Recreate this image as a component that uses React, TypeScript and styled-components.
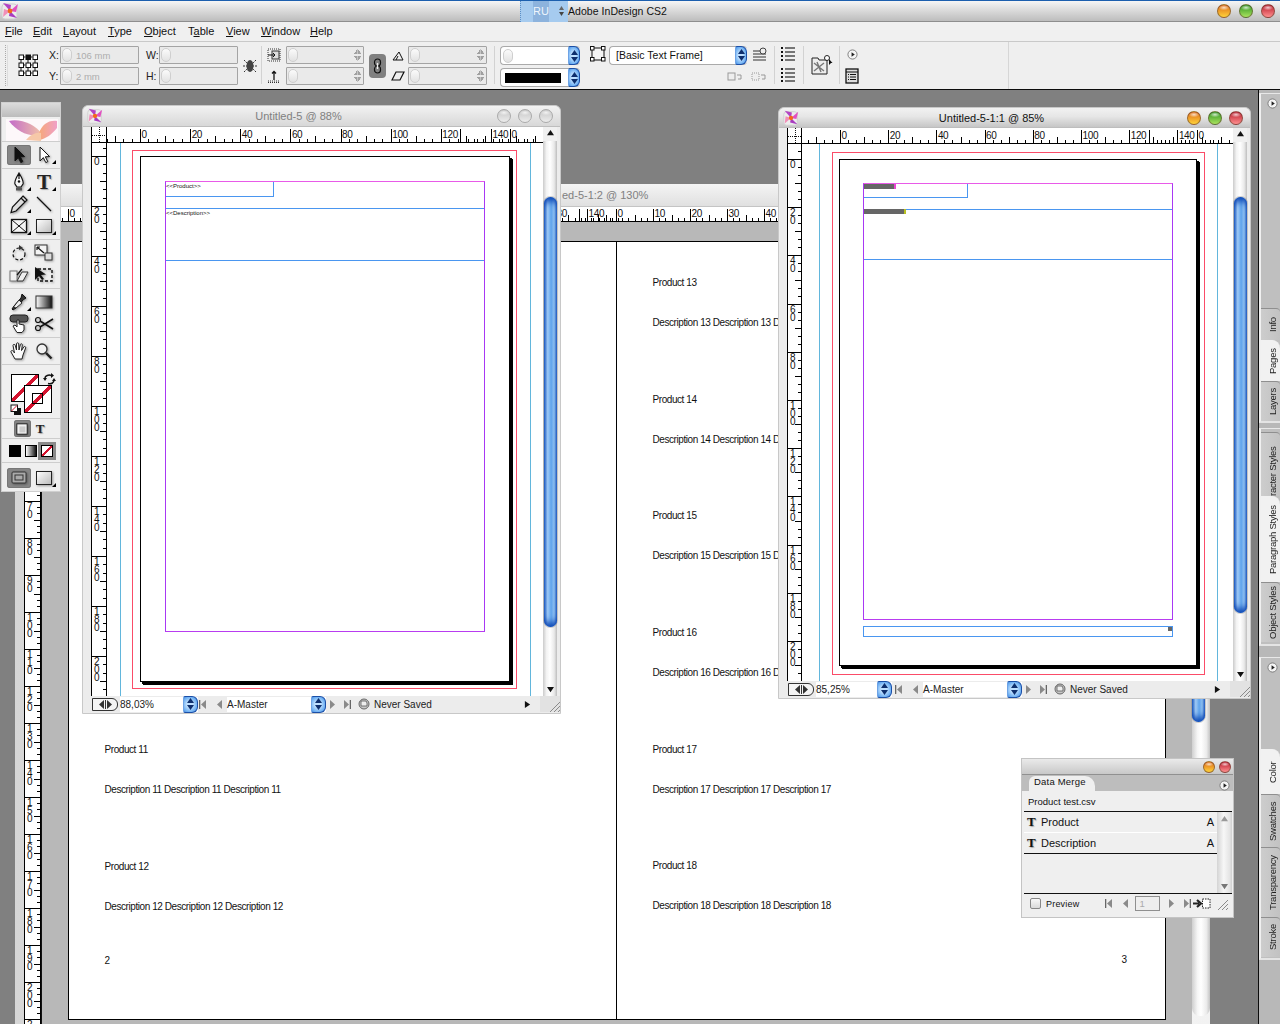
import React from 'react';
import styled, { createGlobalStyle } from 'styled-components';

const Global = createGlobalStyle`
  html, body { margin: 0; padding: 0; width: 1280px; height: 1024px; overflow: hidden; background: #808080; }
  * { box-sizing: border-box; }
  #root { width: 1280px; height: 1024px; font-family: "Liberation Sans", Arial, sans-serif; color: #111; }
`;

const Screen = styled.div`
  width: 1280px; height: 1024px; overflow: hidden;
  display: grid; grid-template-rows: 22px 20px 48px 1fr;
`;

/* ---------- app chrome ---------- */
const AppTitle = styled.header`
  display: flex; align-items: center; position: relative;
  border-top: 1px solid #1c5fae; border-bottom: 1px solid #8e8e8e;
  background: linear-gradient(#f6f6f6, #e4e4e4 30%, #bdbdbd);
  padding-right: 5px;
`;
const AppLogoSlot = styled.div`
  width: 22px; height: 20px; display: flex; align-items: center; justify-content: center; margin-left: -1px;
`;
const LangBox = styled.div`
  margin-left: 499px; width: 48px; height: 21px; background: #a6cbef;
  display: flex; align-items: center; justify-content: space-between; padding: 0 3px 0 12px;
  border-left: 1px dotted #5b8ec5;
`;
const LangCode = styled.span`
  width: 16px; height: 21px; background: #8db3dd; color: #eef5fc; font-size: 11px; line-height: 21px; text-align: center;
`;
const AppName = styled.div`
  font-size: 10.5px; flex: 1; white-space: nowrap; letter-spacing: 0.05px;
`;
const LightRow = styled.div<{ $gap: number }>`
  display: flex; align-items: center; column-gap: ${(p) => p.$gap}px;
`;
const LIGHTS: Record<string, [string, string]> = {
  orange: ['#dd6a18', '#ffd23a'],
  green: ['#2f9420', '#a9e35f'],
  red: ['#b81c2c', '#ff8f8f'],
  off: ['#c6c6c6', '#ececec'],
};
const Light = styled.span<{ $c: string; $s: number }>`
  width: ${(p) => p.$s}px; height: ${(p) => p.$s}px; border-radius: 50%; display: block;
  border: 1px solid ${(p) => (p.$c === 'off' ? '#aaa' : 'rgba(90,60,40,.55)')};
  background: radial-gradient(ellipse 45% 22% at 50% 22%, rgba(255,255,255,.75), transparent 100%),
    linear-gradient(${(p) => LIGHTS[p.$c][0]}, ${(p) => LIGHTS[p.$c][1]});
`;

const MenuBar = styled.nav`
  display: flex; align-items: center; background: #f0f0f0; border-bottom: 1px solid #c9c9c9; padding: 0 0 2px 5px; font-size: 11px;
`;
const MenuItem = styled.span<{ $w: number }>`
  width: ${(p) => p.$w}px; u { text-decoration: underline; }
`;

const ControlBar = styled.div`
  display: flex; align-items: stretch; background: #efefef; border-bottom: 1px solid #0c0c0c; height: 48px; padding-left: 5px;
  position: relative;
`;
const Grip = styled.div`
  width: 3px; margin: 3px 10px 3px 0; border-left: 1px dotted #aaa; border-right: 1px solid #ddd;
`;
const Cell = styled.div<{ $w: number; $ml?: number; $pt?: number }>`
  width: ${(p) => p.$w}px; margin-left: ${(p) => p.$ml ?? 0}px;
  display: flex; flex-direction: column; gap: 3px; padding-top: ${(p) => p.$pt ?? 4}px; align-items: center; flex: none;
`;
const CellRow = styled.div`
  display: flex; height: 18px; align-items: center; justify-content: space-between; width: 100%;
`;
const CellSpacer = styled.span`
  height: 2px; display: block;
`;
const CtrlLabel = styled.span`
  font-size: 10.5px; color: #222;
`;
const CtrlField = styled.div<{ $w: number }>`
  width: ${(p) => p.$w}px; height: 18px; border: 1px solid #a4a4a4; background: #eaeaea; border-radius: 1px;
  display: flex; align-items: center; gap: 4px; padding: 0 2px 0 1px; font-size: 9.5px; color: #adadad; flex: none;
`;
const Knob = styled.i`
  width: 10px; height: 14px; border-radius: 5px; background: linear-gradient(#fbfbfb,#e2e2e2); border: 1px solid #cfcfcf; display: block; flex: none;
`;
const GrayArrows = styled.i`
  margin-left: auto; width: 7px; height: 12px; display: block; flex: none;
  background:
    linear-gradient(to bottom right, transparent 49%, #a0a0a0 50%) 0 0 / 50% 5px no-repeat,
    linear-gradient(to bottom left, transparent 49%, #a0a0a0 50%) 100% 0 / 50% 5px no-repeat,
    linear-gradient(to top right, transparent 49%, #a0a0a0 50%) 0 100% / 50% 5px no-repeat,
    linear-gradient(to top left, transparent 49%, #a0a0a0 50%) 100% 100% / 50% 5px no-repeat;
`;
const Sep = styled.div<{ $ml: number }>`
  width: 1px; background: #d2d2d2; margin: 4px 0 5px ${(p) => p.$ml}px; flex: none;
`;
const Chain = styled.div`
  width: 17px; height: 24px; margin: 12px 0 0 5px; border-radius: 4px; background: #808080; display: flex; align-items: center; justify-content: center; flex: none;
`;
const Select = styled.div<{ $w: number }>`
  width: ${(p) => p.$w}px; height: 19px; background: #fff; border: 1px solid #aaa; border-right: 0; border-radius: 4px;
  display: flex; align-items: center; font-size: 10.5px; padding-left: 2px; position: relative; flex: none; white-space: nowrap;
`;
const BlueSpin = styled.i<{ $w?: number }>`
  position: absolute; right: 0; top: -1px; bottom: -1px; width: ${(p) => p.$w ?? 12}px; border-radius: 2px 6px 6px 2px;
  border: 1px solid #1b4fa8; border-left-color: #6ea3e5;
  background: radial-gradient(ellipse at 45% 50%, #bfe0ff 0 30%, #6fb0f2 70%, #3d7fd8);
  display: flex; align-items: center; justify-content: center;
`;
const StrokeSwatch = styled.span`
  width: 56px; height: 10px; background: #000; margin-left: 2px; display: block;
`;
const SelectText = styled.span`
  margin-left: 4px;
`;
const RightFill = styled.div`
  flex: 1; margin-left: 147px; border-left: 1px solid #d6d6d6;
`;
const MiniRow = styled.div`
  display: flex; justify-content: flex-end; gap: 8px; width: 100%; height: 18px; align-items: center; padding-right: 2px;
`;

/* ---------- workspace ---------- */
const Workspace = styled.main`
  position: relative; background: #808080; overflow: hidden;
`;
const SideStrip = styled.aside`
  position: absolute; left: 1258px; top: 0; width: 22px; height: 934px; background: #b8b8b8;
  border-left: 1px solid #0c0c0c; display: flex; flex-direction: column;
`;
const Dock = styled.div<{ $h: number; $mt: number }>`
  height: ${(p) => p.$h}px; margin-top: ${(p) => p.$mt}px; background: #bfbfbf; flex: none;
  border-left: 2px solid #f0f0f0; border-top: 1px solid #e8e8e8; border-bottom: 2px solid #e4e4e4;
  display: flex; flex-direction: column; justify-content: flex-end; padding-top: 3px; position: relative;
`;
const DockArrowSlot = styled.div`
  position: absolute; left: 6px; top: 4px;
`;
const DockTab = styled.div<{ $h: number; $on?: boolean; $pt?: number }>`
  height: ${(p) => p.$h}px; flex: none; display: flex; justify-content: flex-end; align-items: center;
  overflow: hidden; position: relative; padding-top: ${(p) => p.$pt ?? 0}px;
  background: ${(p) => (p.$on ? '#f1f1f1' : 'linear-gradient(90deg,#cdcdcd,#c2c2c2)')};
  border-top: 1px solid ${(p) => (p.$on ? '#f1f1f1' : '#8f8f8f')};
  border-top-right-radius: ${(p) => (p.$on ? '8px' : '4px')};
`;
const DockLabel = styled.span`
  writing-mode: vertical-rl; transform: rotate(180deg); white-space: nowrap; font-size: 9.5px; letter-spacing: -0.25px; color: #222;
  height: 100%; display: flex; justify-content: center; align-items: center; width: 16px;
`;

/* ---------- windows ---------- */
const DocWindow = styled.section<{ $x: number; $y: number; $w: number; $h: number; $tb: number; $z: number }>`
  position: absolute; left: ${(p) => p.$x}px; top: ${(p) => p.$y}px; width: ${(p) => p.$w}px; height: ${(p) => p.$h}px;
  z-index: ${(p) => p.$z};
  display: grid; grid-template-rows: ${(p) => p.$tb}px 1fr 16px; padding-bottom: 1px;
  background: #ececec; border: 1px solid #c8c8c8; border-radius: 6px 6px 0 0;
`;
const WinTitle = styled.div<{ $active?: boolean }>`
  display: flex; align-items: center; position: relative;
  background: linear-gradient(#f2f2f2, #e6e6e6 45%, ${(p) => (p.$active ? '#c6c6c6' : '#d8d8d8')});
  border-bottom: 1px solid #bdbdbd; border-radius: 6px 6px 0 0; padding: 0 7px 0 3px;
  font-size: 11px; color: ${(p) => (p.$active ? '#111' : '#808080')};
`;
const WinIcon = styled.div`
  width: 18px; height: 18px; display: flex; align-items: center; justify-content: center;
`;
const WinName = styled.div`
  flex: 1; text-align: center; padding-right: 4px;
`;
const WinBody = styled.div<{ $rw: number; $rh: number; $pl: number }>`
  display: grid; grid-template-columns: ${(p) => p.$rw}px 1fr 14px; grid-template-rows: ${(p) => p.$rh}px 1fr;
  padding: 0 3px 0 ${(p) => p.$pl}px; min-height: 0; min-width: 0;
`;
const RulerCorner = styled.div`
  background: #fff; border-left: 1px solid #000; border-bottom: 1px solid #000; border-right: 1px solid #000;
  position: relative;
`;
const RulerSvg = styled.svg`
  display: block; background: #fff; overflow: hidden;
  text { font-family: "Liberation Sans", Arial, sans-serif; font-size: 10px; fill: #111; }
  shape-rendering: crispEdges;
`;
const Scroll = styled.div`
  grid-column: 3; grid-row: 1 / span 2;
  display: flex; flex-direction: column; align-items: center; position: relative; width: 14px; min-height: 0;
  background: linear-gradient(90deg,#cbcbcb,#f3f3f3 25%,#fff 50%,#e9e9e9 80%,#bdbdbd);
`;
const ScrollThumb = styled.div<{ $mt: number; $h: number }>`
  margin-top: ${(p) => p.$mt}px; height: ${(p) => p.$h}px; width: 13px; flex: none; border-radius: 7px;
  background: linear-gradient(90deg,#2563c4,#a3cdf6 28%,#5ea3ec 55%,#93c3f2 78%,#2a66c6);
  box-shadow: inset 0 7px 6px -3px #0d47b4, inset 0 -7px 6px -3px #0d47b4, 0 0 0 1px rgba(120,120,120,.35);
`;
const ScrollEndCap = styled.div`
  margin-top: auto; display: flex; justify-content: center; padding-bottom: 3px;
`;
const ScrollTopCap = styled.div`
  padding-top: 2px; display: flex; justify-content: center; width: 100%; height: 14px; flex: none;
  background: #f0f0f0;
`;

const Canvas = styled.div`
  position: relative; background: #fff; overflow: hidden; min-width: 0; min-height: 0;
`;
const Guide = styled.i<{ $x: number }>`
  position: absolute; left: ${(p) => p.$x}px; top: 0; bottom: 0; width: 1px; background: #62b6dc;
`;
const Bleed = styled.div<{ $x: number; $y: number; $w: number; $h: number }>`
  position: absolute; left: ${(p) => p.$x}px; top: ${(p) => p.$y}px; width: ${(p) => p.$w}px; height: ${(p) => p.$h}px;
  border: 1px solid #fb4c68;
`;
const SheetPage = styled.div<{ $x: number; $y: number; $w: number; $h: number }>`
  position: absolute; left: ${(p) => p.$x}px; top: ${(p) => p.$y}px; width: ${(p) => p.$w}px; height: ${(p) => p.$h}px;
  border: 1px solid #000; box-shadow: 2px 2px 0 #000, 3px 3px 0 #000; background: #fff;
`;
const MarginBox = styled.div<{ $x: number; $y: number; $w: number; $h: number }>`
  position: absolute; left: ${(p) => p.$x}px; top: ${(p) => p.$y}px; width: ${(p) => p.$w}px; height: ${(p) => p.$h}px;
  border: 1px solid #a838f4; border-top-color: #e85ae8; border-bottom-color: #b83cf0;
`;
const ProductFrame = styled.div<{ $w: number; $h: number }>`
  width: ${(p) => p.$w}px; height: ${(p) => p.$h}px; border-right: 1px solid #4a96f0; border-bottom: 1px solid #4a96f0;
`;
const FrameLine = styled.i<{ $y: number }>`
  position: absolute; left: 0; right: 0; top: ${(p) => p.$y}px; height: 1px; background: #4a96f0;
`;
const TinyTag = styled.span<{ $y: number }>`
  position: absolute; left: 0; top: ${(p) => p.$y}px; font-size: 6px; line-height: 8px; color: #111; white-space: nowrap;
`;
const PlaceholderBar = styled.i<{ $y: number; $w: number; $c: string }>`
  position: absolute; left: 0; top: ${(p) => p.$y}px; width: ${(p) => p.$w}px; height: 5px; background: #666;
  border-right: 2px solid ${(p) => p.$c};
`;
const FooterFrame = styled.div<{ $x: number; $y: number; $w: number; $h: number }>`
  position: absolute; left: ${(p) => p.$x}px; top: ${(p) => p.$y}px; width: ${(p) => p.$w}px; height: ${(p) => p.$h}px;
  border: 1px solid #4a96f0;
`;
const OverflowDot = styled.i`
  position: absolute; right: 0; top: 0; width: 4px; height: 4px; background: #666;
`;

const StatusBar = styled.div<{ $pl: number }>`
  display: flex; align-items: center; height: 16px; padding-left: ${(p) => p.$pl}px; font-size: 10px; color: #222; background: #ececec; position: relative;
`;
const PageToggle = styled.div`
  width: 26px; height: 13px; border: 1px solid #333; border-radius: 0 6px 6px 0; background: #f4f4f4; display: flex; align-items: center; justify-content: center; flex: none; margin-right: 2px;
`;
const StatusField = styled.div<{ $w: number; $ml?: number }>`
  width: ${(p) => p.$w}px; height: 15px; margin-left: ${(p) => p.$ml ?? 0}px; background: #fff; position: relative; display: flex; align-items: center; flex: none; white-space: nowrap;
`;
const Nav = styled.span<{ $ml: number }>`
  margin-left: ${(p) => p.$ml}px; display: flex; flex: none;
`;
const Saved = styled.span`
  margin-left: 4px; white-space: nowrap;
`;
const StatusEnd = styled.div`
  margin-left: auto; display: flex; align-items: center; gap: 9px; height: 16px;
`;
const ResizeGrip = styled.div`
  width: 20px; height: 16px; display: flex; align-items: flex-end; justify-content: flex-end; background: #e2e2e2;
`;

/* back document */
const BackWindow = styled.section`
  position: absolute; left: 15px; top: 94px; width: 1195px; height: 840px; z-index: 1;
  display: grid; grid-template-rows: 23px 15px 1fr; grid-template-columns: 9px 17px 1fr 18px;
  background: linear-gradient(90deg,#d6d6d6,#fff 60%,#f2f2f2);
`;
const BackTitle = styled.div`
  grid-column: 1 / -1; background: linear-gradient(#f4f4f4,#e0e0e0); border-bottom: 1px solid #c4c4c4; font-size: 11px; color: #808080;
  line-height: 22px; padding-left: 547px; white-space: nowrap;
`;
const BackCorner = styled.div`
  background: #fff; grid-column: 2; grid-row: 2;
`;
const BackHRuler = styled.div`
  grid-column: 3; grid-row: 2;
`;
const BackVRuler = styled.div`
  grid-column: 2; grid-row: 3;
`;
const Pasteboard = styled.div`
  grid-column: 3; grid-row: 3; background: #b8b8b8; padding: 19px 0 0 26px; overflow: hidden; border-left: 1px solid #111;
`;
const Spread = styled.div`
  width: 1098px; height: 779px; background: #fff; border: 1px solid #000; display: grid; grid-template-columns: 547px 1fr;
`;
const PageCol = styled.div<{ $pt: number }>`
  padding: ${(p) => p.$pt}px 38px 0 35.5px; display: flex; flex-direction: column;
  & + & { border-left: 1px solid #000; }
`;
const EntryList = styled.div`
  display: flex; flex-direction: column; row-gap: 62.67px;
`;
const Entry = styled.div`
  display: flex; flex-direction: column; gap: 26px; font-size: 10px; line-height: 14px; letter-spacing: -0.43px; white-space: nowrap;
`;
const PageNum = styled.div<{ $end?: boolean }>`
  margin-top: 40px; font-size: 10px; line-height: 14px; align-self: ${(p) => (p.$end ? 'flex-end' : 'flex-start')};
`;
const BackScroll = styled.div`
  grid-column: 4; grid-row: 2 / span 2; display: flex; flex-direction: column; align-items: flex-start; width: 18px;
  background: linear-gradient(90deg,#cfcfcf,#f5f5f5 30%,#fff 50%,#ececec 80%,#c4c4c4);
  border-radius: 0 0 8px 8px; margin-bottom: 8px;
`;

/* toolbox */
const Toolbox = styled.aside`
  position: absolute; left: 1px; top: 12px; width: 60px; height: 390px; z-index: 5; background: #efefef; border: 1px solid #cfcfcf;
  display: flex; flex-direction: column;
`;
const ToolTitle = styled.div`
  height: 14px; flex: none; background: linear-gradient(#dcdcdc,#bcbcbc);
`;
const Banner = styled.div`
  height: 25px; flex: none; padding: 2px 3px 0 4px; border-bottom: 1px solid #cdcdcd;
`;
const ToolSection = styled.div<{ $last?: boolean }>`
  display: flex; flex-direction: column; row-gap: 1px; padding: ${(p) => (p.$last ? '5px' : '3px')} 0 2px; flex: none;
  border-bottom: ${(p) => (p.$last ? '0' : '1px solid #cdcdcd')};
`;
const ToolRow = styled.div`
  display: grid; grid-template-columns: 25px 25px; height: 21px; padding-left: 5px;
`;
const Tool = styled.div<{ $on?: boolean; $more?: boolean; $small?: boolean }>`
  position: relative; display: flex; align-items: center; justify-content: center;
  width: ${(p) => (p.$small ? 17 : 24)}px; height: ${(p) => (p.$small ? 17 : 20)}px; border-radius: 3px;
  background: ${(p) => (p.$on ? '#868686' : 'transparent')};
  box-shadow: ${(p) => (p.$on ? 'inset 0 0 0 1px #777' : 'none')};
  svg { filter: drop-shadow(1px 1px 1px rgba(0,0,0,.35)); }
  ${(p) =>
    p.$more
      ? `&::after { content: ""; position: absolute; right: 0; bottom: 1px; border: 2px solid transparent; border-right-color: #000; border-bottom-color: #000; }`
      : ''}
`;
const ToolLetter = styled.span<{ $s: number }>`
  font-family: "Liberation Serif", serif; font-weight: 700; font-size: ${(p) => p.$s}px; line-height: 18px; color: #222; text-shadow: 1px 1px 1px rgba(0,0,0,.3);
`;
const ColorWell = styled.div`
  height: 54px; flex: none; position: relative; border-bottom: 1px solid #cdcdcd;
`;
const Swatch = styled.div<{ $x: number; $y: number; $w: number }>`
  position: absolute; left: ${(p) => p.$x}px; top: ${(p) => p.$y}px; width: ${(p) => p.$w}px; height: ${(p) => p.$w}px;
  background: linear-gradient(to bottom right, #fff 46%, #d4122e 46% 54%, #fff 54%) ; border: 1px solid #000;
`;
const InnerHole = styled.i`
  position: absolute; left: 7px; top: 7px; width: 11px; height: 11px; border: 1px solid #000;
`;
const SwapSlot = styled.div`
  position: absolute; left: 41px; top: 7px;
`;
const DefaultSlot = styled.div`
  position: absolute; left: 8px; top: 37px;
`;
const SmallRow = styled.div<{ $h: number; $pl: number }>`
  height: ${(p) => p.$h}px; flex: none; display: flex; align-items: center; padding-left: ${(p) => p.$pl}px; border-bottom: 1px solid #cdcdcd;
`;
const SmallTool = styled.div<{ $w: number }>`
  width: ${(p) => p.$w}px; height: 18px; display: flex; align-items: center; justify-content: center; border-radius: 3px; flex: none;
`;
const SmallBtn = styled.span<{ $on?: boolean; $bg: string }>`
  width: 12px; height: 12px; display: block; background: ${(p) => p.$bg};
  outline: ${(p) => (p.$on ? '3px solid #8a8a8a' : 'none')}; border: 1px solid #000;
`;

/* data merge */
const MergePanel = styled.section`
  position: absolute; left: 1021px; top: 668px; width: 213px; height: 160px; z-index: 6; background: #efefef; border: 1px solid #c4c4c4;
  display: flex; flex-direction: column;
`;
const MergeTitle = styled.div`
  height: 15px; flex: none; background: linear-gradient(#eaeaea,#c8c8c8); display: flex; justify-content: flex-end; padding: 0 2px 0 0; align-items: center;
`;
const MergeTabs = styled.div`
  height: 17px; flex: none; background: #bdbdbd; display: flex; align-items: flex-end; justify-content: space-between; padding: 0 3px 0 7px; border-top: 1px solid #909090;
`;
const MergeTab = styled.div`
  background: #efefef; width: 66px; height: 15px; font-size: 9.5px; line-height: 12px; padding-left: 5px; border-radius: 6px 10px 0 0; letter-spacing: 0.2px;
`;
const FileLine = styled.div`
  height: 21px; flex: none; font-size: 9.5px; line-height: 22px; padding-left: 4px; margin: 0 1px 0 2px; border-bottom: 1px solid #111;
`;
const MergeMid = styled.div`
  height: 82px; flex: none; display: grid; grid-template-columns: 1fr 15px; margin: 0 1px 0 2px; border-bottom: 1px solid #111;
`;
const MergeList = styled.div`
  display: flex; flex-direction: column;
`;
const MergeRow = styled.div<{ $last?: boolean }>`
  height: 21px; display: flex; align-items: center; padding: 0 3px 0 3px; font-size: 11px;
  border-bottom: 1px solid ${(p) => (p.$last ? '#111' : '#fff')};
`;
const MergeT = styled.span`
  font-family: "Liberation Serif", serif; font-weight: 700; font-size: 13px; width: 14px; flex: none; text-shadow: 1px 1px 1px rgba(0,0,0,.3);
`;
const MergeA = styled.span`
  margin-left: auto;
`;
const MergeScroll = styled.div`
  display: flex; flex-direction: column; align-items: center; justify-content: space-between; padding: 3px 0;
  background: linear-gradient(90deg,#d4d4d4,#f7f7f7 45%,#e4e4e4 85%,#cfcfcf);
`;
const MergeFoot = styled.div`
  height: 22px; display: flex; align-items: center; padding: 0 0 3px 8px; font-size: 9px; letter-spacing: .2px;
`;
const Check = styled.i`
  width: 11px; height: 11px; border: 1px solid #888; border-radius: 2px; background: linear-gradient(#f8f8f8,#dadada); display: block; margin-right: 5px; flex: none;
`;
const PageBox = styled.div`
  width: 25px; height: 15px; border: 1px solid #8f8f8f; background: #eeeeee; color: #aaa; font-size: 9.5px; line-height: 13px; padding-left: 3px; margin-left: 6px; flex: none;
`;

/* ---------- drawings ---------- */
const Butterfly = ({ s = 18 }: { s?: number }) => (
  <svg width={s} height={s} viewBox="0 0 20 20">
    <rect x="2" y="3" width="15" height="15" rx="3" fill="#ececec" stroke="#cfcfcf" />
    <path d="M10 10 L3 2 L11 4 Z" fill="#b343c4" />
    <path d="M10 10 L18 3 L16 11 Z" fill="#e24fc0" />
    <path d="M10 10 L17 17 L9 15 Z" fill="#a83cc0" />
    <path d="M10 10 L3 16 L4 8 Z" fill="#f18fb8" />
    <circle cx="10" cy="10" r="2.4" fill="#f26a1b" />
  </svg>
);
const BannerArt = () => (
  <svg width="52" height="22" viewBox="0 0 52 22" style={{ display: 'block' }}>
    <defs>
      <linearGradient id="wl" x1="0" x2="1"><stop offset="0" stopColor="#c36bc9" /><stop offset="1" stopColor="#f0c0a8" /></linearGradient>
      <linearGradient id="wr" x1="0" x2="1"><stop offset="0" stopColor="#f6a878" /><stop offset="1" stopColor="#f0a0c8" /></linearGradient>
    </defs>
    <rect width="52" height="22" fill="#fdf8fa" />
    <path d="M3 2 C14 -1 30 6 35 14 C28 20 12 14 3 2 Z" fill="url(#wl)" />
    <path d="M33 14 C36 6 42 1 51 2 L51 9 C46 15 40 20 33 21 Z" fill="url(#wr)" />
    <path d="M20 21 C24 16 30 13 35 14 L35 22 Z" fill="#f6c8a8" />
  </svg>
);
const LangArrows = () => (
  <svg width="7" height="12" viewBox="0 0 7 12" style={{ display: 'block' }}>
    <polygon points="3.5,1 6,5 1,5" fill="#666" />
    <polygon points="1,7 6,7 3.5,11" fill="#444" />
  </svg>
);
const Tri = ({ d, c = '#111', s = 7 }: { d: 'u' | 'd' | 'l' | 'r'; c?: string; s?: number }) => {
  const pts = { u: '4,1 8,7 0,7', d: '0,1 8,1 4,7', l: '7,0 7,8 1,4', r: '1,0 1,8 7,4' }[d];
  return (
    <svg width={s} height={s} viewBox="0 0 8 8" style={{ display: 'block' }}>
      <polygon points={pts} fill={c} />
    </svg>
  );
};
const NavArrow = ({ d, bar }: { d: 'l' | 'r'; bar?: boolean }) => (
  <svg width="8" height="9" viewBox="0 0 8 9" style={{ display: 'block' }}>
    {d === 'l' ? <polygon points="7,0 7,9 2,4.5" fill="#8a8a8a" /> : <polygon points="1,0 1,9 6,4.5" fill="#8a8a8a" />}
    {bar && (d === 'l' ? <rect x="0" y="0" width="1.3" height="9" fill="#666" /> : <rect x="6.7" y="0" width="1.3" height="9" fill="#666" />)}
  </svg>
);
const SpinArrows = () => (
  <svg width="7" height="12" viewBox="0 0 7 12">
    <polygon points="3.5,0 7,5 0,5" fill="#0e2f6e" />
    <polygon points="0,7 7,7 3.5,12" fill="#0e2f6e" />
  </svg>
);
const Circle = () => (
  <svg width="11" height="11" viewBox="0 0 12 12" style={{ display: 'block' }}>
    <circle cx="6" cy="6" r="5" fill="#f5f5f5" stroke="#777" />
    <polygon points="5,3.5 5,8.5 8.5,6" fill="#222" />
  </svg>
);
const ResizeMark = () => (
  <svg width="13" height="13" viewBox="0 0 13 13" style={{ display: 'block' }}>
    <path d="M3 13 L13 3 M7 13 L13 7 M11 13 L13 11" stroke="#8a8a8a" />
  </svg>
);
const Toggle = () => (
  <svg width="13" height="9" viewBox="0 0 13 9">
    <polygon points="5,0 5,9 0,4.5" fill="#333" />
    <rect x="6" y="0" width="1" height="9" fill="#333" />
    <polygon points="8,0 8,9 13,4.5" fill="#333" />
  </svg>
);
const SavedIcon = () => (
  <svg width="12" height="12" viewBox="0 0 12 12" style={{ display: 'block' }}>
    <circle cx="6" cy="6" r="5" fill="#c8c8c8" stroke="#666" />
    <path d="M3 3h5l1 2v3H3z" fill="#eee" stroke="#555" strokeWidth=".8" />
  </svg>
);

const ink = { fill: 'none', stroke: '#111', strokeWidth: 1.2 } as const;
const IconSel = ({ white }: { white?: boolean }) => (
  <svg width="18" height="18" viewBox="0 0 18 18">
    <path d="M5 1 L5 15 L8.3 11.6 L10.8 16.6 L12.8 15.6 L10.3 10.8 L14.6 10.6 Z" fill={white ? '#fff' : '#111'} stroke="#111" />
  </svg>
);
const IconPen = () => (
  <svg width="18" height="20" viewBox="0 0 18 20">
    <path d="M9 1 L9 7 M9 1 C6 6 4 9 5 12 L7 15 L11 15 L13 12 C14 9 12 6 9 1 Z" {...ink} fill="#f4f4f4" />
    <circle cx="9" cy="9.5" r="1.2" fill="#111" />
    <rect x="6" y="15.5" width="6" height="3" fill="#555" />
  </svg>
);
const IconPencil = () => (
  <svg width="20" height="20" viewBox="0 0 20 20">
    <path d="M14 2 L18 6 L7 17 L2 18.5 L3.5 13 Z" {...ink} fill="#ddd" />
    <path d="M12 4 L16 8" {...ink} />
  </svg>
);
const IconLine = () => (
  <svg width="18" height="18" viewBox="0 0 18 18"><path d="M2 2 L16 16" {...ink} /></svg>
);
const IconFrame = () => (
  <svg width="18" height="16" viewBox="0 0 18 16">
    <rect x="1.5" y="1.5" width="15" height="13" fill="#f4f4f4" stroke="#111" strokeWidth="1.3" />
    <path d="M2 2 L16 14 M16 2 L2 14" stroke="#111" />
  </svg>
);
const IconRect = () => (
  <svg width="18" height="16" viewBox="0 0 18 16">
    <defs><linearGradient id="rg" x1="0" y1="0" x2="1" y2="1"><stop offset="0" stopColor="#fff" /><stop offset="1" stopColor="#bbb" /></linearGradient></defs>
    <rect x="1.5" y="1.5" width="15" height="13" fill="url(#rg)" stroke="#222" />
  </svg>
);
const IconRotate = () => (
  <svg width="18" height="18" viewBox="0 0 18 18">
    <circle cx="9" cy="10" r="6" {...ink} strokeDasharray="3 2" />
    <path d="M9 1 L13 4 L9 6 Z" fill="#333" />
  </svg>
);
const IconScale = () => (
  <svg width="20" height="18" viewBox="0 0 20 18">
    <rect x="1" y="1" width="12" height="10" fill="#f4f4f4" stroke="#333" />
    <rect x="11" y="9" width="7" height="7" fill="#ddd" stroke="#333" />
    <path d="M3 3 L10 9 M3 3 L3 6 M3 3 L6 3" {...ink} />
  </svg>
);
const IconShear = () => (
  <svg width="20" height="16" viewBox="0 0 20 16">
    <rect x="1" y="4" width="7" height="10" fill="#f0f0f0" stroke="#777" />
    <path d="M8 14 L13 5 L19 5 L14 14 Z" fill="#eee" stroke="#333" />
    <path d="M8 8 L13 2" {...ink} />
  </svg>
);
const IconFree = () => (
  <svg width="20" height="18" viewBox="0 0 20 18">
    <rect x="4" y="3" width="14" height="12" fill="none" stroke="#111" strokeWidth="1.4" strokeDasharray="3 2" />
    <path d="M1 1 L1 14 L5 10 L8 14 L10 13 L7 9 L12 8.5 Z" fill="#111" />
  </svg>
);
const IconDrop = () => (
  <svg width="18" height="20" viewBox="0 0 18 20">
    <path d="M12 2 L16 6 L13.5 7.5 L6 16 L3 18 L2 17 L4 14 L11 6 Z" fill="#333" stroke="#111" />
    <path d="M9 8 L12 11 L6 16 L3.5 15 Z" fill="#eee" stroke="#111" strokeWidth=".8" />
  </svg>
);
const IconGrad = () => (
  <svg width="18" height="14" viewBox="0 0 18 14">
    <defs><linearGradient id="gg"><stop offset="0" stopColor="#fff" /><stop offset="1" stopColor="#111" /></linearGradient></defs>
    <rect x="1" y="1" width="16" height="12" fill="url(#gg)" stroke="#333" />
  </svg>
);
const IconButton = () => (
  <svg width="20" height="20" viewBox="0 0 20 20">
    <rect x="1" y="1" width="18" height="7" rx="3" fill="#555" stroke="#222" />
    <path d="M7 17 L4 12 L6 11 L8 13 L8 6 L10 6 L10 10 L15 11 L15 16 L13 18.5 L8 18.5 Z" fill="#fff" stroke="#222" />
  </svg>
);
const IconScissors = () => (
  <svg width="20" height="16" viewBox="0 0 20 16">
    <circle cx="4" cy="4" r="2.5" {...ink} /><circle cx="4" cy="12" r="2.5" {...ink} />
    <path d="M6 5 L19 13 M6 11 L19 3" stroke="#111" strokeWidth="1.6" />
  </svg>
);
const IconHand = () => (
  <svg width="20" height="20" viewBox="0 0 20 20">
    <path d="M6 18 L2 11 C1.5 9.5 3.5 9 4.5 10.5 L5.5 12 L4 4.5 C4 3 6 3 6.3 4.5 L7.5 9 L7.5 2.8 C7.5 1.5 9.6 1.5 9.7 2.8 L10 9 L11.4 3.6 C11.7 2.3 13.5 2.7 13.3 4 L12.5 9.5 L14.8 6 C15.6 5 17.2 5.7 16.6 7 L14 14 L13 18 Z" fill="#fbfbfb" stroke="#222" />
  </svg>
);
const IconZoom = () => (
  <svg width="18" height="18" viewBox="0 0 18 18">
    <circle cx="7" cy="7" r="5" fill="#f2f2f2" stroke="#333" strokeWidth="1.3" />
    <path d="M11 11 L16.5 16.5" stroke="#222" strokeWidth="2.4" />
  </svg>
);
const IconSwap = () => (
  <svg width="13" height="13" viewBox="0 0 13 13">
    <path d="M2 5 C2 2.5 6 1.5 8 2.5 M11 7 C11 10 8 11.5 5 10.5" {...ink} strokeWidth="1.5" />
    <path d="M0 5 L4 5 L2 8 Z M8 0 L8 5 L11 2.5 Z M11 5 L13 8 L9 8 Z" fill="#111" />
  </svg>
);
const IconDefault = () => (
  <svg width="12" height="12" viewBox="0 0 12 12">
    <rect x="4" y="4" width="7" height="7" fill="#111" />
    <rect x="1" y="1" width="6.5" height="6.5" fill="#fff" stroke="#111" />
    <path d="M1.5 7 L7 1.5" stroke="#d4122e" />
  </svg>
);
const IconFormatBox = () => (
  <svg width="12" height="12" viewBox="0 0 14 14">
    <rect x="1" y="1" width="12" height="12" fill="#f2f2f2" stroke="#111" />
    <rect x="4" y="4" width="7" height="7" fill="#ccc" />
  </svg>
);
const IconNormal = () => (
  <svg width="16" height="14" viewBox="0 0 16 14">
    <rect x="1" y="1" width="14" height="11" rx="1" fill="#aaa" stroke="#333" />
    <rect x="4" y="4" width="8" height="5" fill="none" stroke="#333" />
  </svg>
);
const IconRefPoint = () => (
  <svg width="20" height="24" viewBox="0 0 20 24">
    {[0, 1, 2].map((r) =>
      [0, 1, 2].map((c) => (
        <rect key={`${r}${c}`} x={1 + c * 7} y={2 + r * 8} width="4.5" height="4.5" fill={r === 0 && c === 1 ? '#111' : '#fff'} stroke="#111" />
      )),
    )}
    <path d="M5.5 4 h2 M12.5 4 h2 M5.5 12 h2 M12.5 12 h2 M5.5 20 h2 M12.5 20 h2 M3 6.5 v3.5 M10 6.5 v3.5 M17 6.5 v3.5 M3 14.5 v3.5 M10 14.5 v3.5 M17 14.5 v3.5" stroke="#111" />
  </svg>
);
const IconBug = () => (
  <svg width="14" height="18" viewBox="0 0 14 18">
    <ellipse cx="7" cy="9" rx="3.5" ry="6" fill="#444" />
    <path d="M1 3 L4 6 M13 3 L10 6 M0 9 H4 M14 9 H10 M1 15 L4 12 M13 15 L10 12" stroke="#333" strokeDasharray="2 1" />
  </svg>
);
const IconWrapA = () => (
  <svg width="14" height="14" viewBox="0 0 14 14">
    <path d="M1 1 h12 v12 h-12 z" fill="none" stroke="#333" strokeDasharray="1 1" />
    <rect x="5" y="3" width="7" height="8" fill="#ddd" stroke="#333" />
    <path d="M1 7 h7 M6 5 l2 2 l-2 2" stroke="#111" fill="none" />
  </svg>
);
const IconWrapB = () => (
  <svg width="14" height="14" viewBox="0 0 14 14">
    <path d="M1 12 h12 M1 13.5 h12" stroke="#333" strokeDasharray="1 1" />
    <path d="M7 11 V2 M5 4.5 l2-2 l2 2" stroke="#111" fill="none" strokeWidth="1.3" />
  </svg>
);
const IconAngle = () => (
  <svg width="14" height="11" viewBox="0 0 14 11"><path d="M2 10 L12 10 L8 2 Z M5 10 L7 6" fill="none" stroke="#111" /></svg>
);
const IconSkew = () => (
  <svg width="14" height="10" viewBox="0 0 14 10"><path d="M1 9 L5 1 L13 1 L9 9 Z" fill="#eee" stroke="#111" strokeWidth="1.2" /></svg>
);
const IconLink = () => (
  <svg width="9" height="16" viewBox="0 0 9 16">
    <rect x="1.5" y="1" width="6" height="7" rx="3" fill="none" stroke="#111" strokeWidth="1.2" />
    <rect x="1.5" y="8" width="6" height="7" rx="3" fill="none" stroke="#111" strokeWidth="1.2" />
    <path d="M4.5 5 V11" stroke="#eee" strokeWidth="1.4" />
  </svg>
);
const IconFrameSel = () => (
  <svg width="16" height="16" viewBox="0 0 16 16">
    <rect x="2" y="2" width="12" height="12" fill="#f4f4f4" stroke="#111" />
    {[[0.5, 0.5], [11.5, 0.5], [0.5, 11.5], [11.5, 11.5]].map(([x, y]) => (
      <rect key={`${x}${y}`} x={x} y={y} width="3.5" height="3.5" fill="#fff" stroke="#111" />
    ))}
  </svg>
);
const IconList = () => (
  <svg width="16" height="18" viewBox="0 0 16 18" style={{ display: 'block' }}>
    {[2, 6, 10, 14].map((y) => (
      <g key={y}>
        <rect x="1" y={y - 1} width="2" height="2" fill="#111" />
        <path d={`M5 ${y} H15`} stroke="#333" strokeWidth="1.3" />
      </g>
    ))}
  </svg>
);
const IconStylePick = () => (
  <svg width="17" height="17" viewBox="0 0 17 17">
    <path d="M1 4 H11 M1 7 H14 M1 10 H14 M1 13 H14" stroke="#333" strokeWidth="1.2" />
    <circle cx="11" cy="4" r="3" fill="#eee" stroke="#444" />
  </svg>
);
const IconMini = ({ star }: { star?: boolean }) => (
  <svg width="16" height="9" viewBox="0 0 16 9">
    <rect x="1" y="1" width="7" height="7" fill="#eee" stroke="#999" strokeDasharray={star ? '1 1' : undefined} />
    <path d="M10 3 L14 3 L14 7 L11 7" fill="none" stroke="#999" />
  </svg>
);
const IconFolio = () => (
  <svg width="22" height="22" viewBox="0 0 22 22">
    <path d="M1 4 L7 4 L8 6 L16 6 L16 20 L1 20 Z" fill="#eee" stroke="#222" />
    <path d="M3 9 L13 17 M13 9 L3 17 M6 8 L10 18" stroke="#777" strokeWidth="1.4" />
    <circle cx="16" cy="4" r="2.5" fill="#fff" stroke="#222" />
    <path d="M18 5 L18 11 L20 9 L21.5 9 Z" fill="#111" />
  </svg>
);
const IconDoc = () => (
  <svg width="14" height="16" viewBox="0 0 14 16" style={{ display: 'block' }}>
    <rect x="1" y="1" width="12" height="14" fill="#ddd" stroke="#111" strokeWidth="1.3" />
    <path d="M1 4 H13 M5 6.5 H11 M5 9 H11 M5 11.5 H11 M3 6.5 h1 M3 9 h1 M3 11.5 h1" stroke="#111" />
  </svg>
);
const IconPlace = () => (
  <svg width="18" height="11" viewBox="0 0 18 11">
    <path d="M0 5.5 H6 M4 2 L8 5.5 L4 9" stroke="#222" strokeWidth="2.2" fill="none" />
    <rect x="9.5" y="1" width="7.5" height="9" fill="#fff" stroke="#222" strokeDasharray="1.5 1" />
  </svg>
);
const Crosshair = () => (
  <svg width="14" height="15" viewBox="0 0 14 15" style={{ display: 'block' }}>
    <path d="M0 8.5 H14 M7.5 0 V15" stroke="#111" strokeDasharray="1 1" shapeRendering="crispEdges" />
  </svg>
);

/* ---------- rulers ---------- */
type Run = { x0: number; unit: number; values: number[]; step: number };
function ticks(pos: number, s: number, out: Array<{ p: number; k: number }>) {
  for (let k = 0; k < 6; k++) out.push({ p: pos + (s * k) / 6, k });
}
const HRuler = ({ w, h, runs }: { w: number; h: number; runs: Run[] }) => {
  const t: Array<{ p: number; k: number }> = [];
  const labels: Array<{ x: number; v: number }> = [];
  runs.forEach((r) => {
    const s = r.step * r.unit;
    ticks(r.x0 + r.values[0] * r.unit - s, s, t);
    r.values.forEach((v) => {
      const x = r.x0 + v * r.unit;
      ticks(x, s, t);
      labels.push({ x, v });
    });
  });
  return (
    <RulerSvg width={w} height={h} viewBox={`0 0 ${w} ${h}`}>
      <path d={`M0 ${h - 0.5} H${w}`} stroke="#000" />
      {t.map(({ p, k }, i) => {
        const len = k === 0 ? h - 2 : k === 3 ? 7 : 4;
        const x = Math.round(p) + 0.5;
        return <path key={i} d={`M${x} ${h} V${h - len}`} stroke="#000" />;
      })}
      {labels.map((l, i) => (
        <text key={i} x={l.x + 1.5} y={h - 5} letterSpacing="-0.35">{l.v}</text>
      ))}
    </RulerSvg>
  );
};
const VRuler = ({ w, h, y0, unit, step, from, to }: { w: number; h: number; y0: number; unit: number; step: number; from: number; to: number }) => {
  const s = step * unit;
  const t: Array<{ p: number; k: number }> = [];
  const labels: Array<{ y: number; v: string }> = [];
  ticks(y0 + from * unit - s, s, t);
  for (let v = from; v <= to; v += step) {
    const y = y0 + v * unit;
    ticks(y, s, t);
    labels.push({ y, v: String(v) });
  }
  return (
    <RulerSvg width={w} height={h} viewBox={`0 0 ${w} ${h}`}>
      <path d={`M0.5 0 V${h} M${w - 0.5} 0 V${h}`} stroke="#000" />
      {t.map(({ p, k }, i) => {
        const len = k === 0 ? w : k === 3 ? 7 : 4;
        const y = Math.round(p) + 0.5;
        return <path key={i} d={`M${w} ${y} H${w - len}`} stroke="#000" />;
      })}
      {labels.map((l) => (
        <text key={l.v}>
          {l.v.split('').map((c, j) => (
            <tspan key={j} x={3} y={l.y + 9 + j * 8}>{c}</tspan>
          ))}
        </text>
      ))}
    </RulerSvg>
  );
};

const range = (a: number, b: number, s: number) => {
  const r: number[] = [];
  for (let i = a; i <= b; i += s) r.push(i);
  return r;
};

const Track = ({ mt, h }: { mt: number; h: number }) => (
  <Scroll>
    <ScrollTopCap><Tri d="u" /></ScrollTopCap>
    <ScrollThumb $mt={mt} $h={h} />
    <ScrollEndCap><Tri d="d" /></ScrollEndCap>
  </Scroll>
);

const Status = ({ pl, zoom, zw, mid }: { pl: number; zoom: string; zw: number; mid: number }) => (
  <StatusBar $pl={pl}>
    <PageToggle><Toggle /></PageToggle>
    <StatusField $w={zw}>{zoom}<BlueSpin $w={15}><SpinArrows /></BlueSpin></StatusField>
    <Nav $ml={mid}><NavArrow d="l" bar /></Nav>
    <Nav $ml={8}><NavArrow d="l" /></Nav>
    <StatusField $w={99} $ml={4}>A-Master<BlueSpin $w={15}><SpinArrows /></BlueSpin></StatusField>
    <Nav $ml={3}><NavArrow d="r" /></Nav>
    <Nav $ml={6}><NavArrow d="r" bar /></Nav>
    <Nav $ml={7}><SavedIcon /></Nav>
    <Saved>Never Saved</Saved>
    <StatusEnd>
      <Tri d="r" />
      <ResizeGrip><ResizeMark /></ResizeGrip>
    </StatusEnd>
  </StatusBar>
);

const Field = ({ w, text, arrows }: { w: number; text?: string; arrows?: boolean }) => (
  <CtrlField $w={w}><Knob />{text}{arrows && <GrayArrows />}</CtrlField>
);

const entriesRight = [13, 14, 15, 16, 17, 18];
const entriesLeft = [11, 12];
/* Rows 13 to 16 run under the active document window; the visible part is what is written. */
const EntryBlock = ({ n }: { n: number }) => (
  <Entry>
    <span>Product {n}</span>
    <span>
      {n >= 13 && n <= 16
        ? `Description ${n} Description ${n} D`
        : `Description ${n} Description ${n} Description ${n}`}
    </span>
  </Entry>
);

export default function App() {
  return (
    <Screen>
      <Global />
      <AppTitle>
        <AppLogoSlot><Butterfly s={20} /></AppLogoSlot>
        <LangBox><LangCode>RU</LangCode><LangArrows /></LangBox>
        <AppName>Adobe InDesign CS2</AppName>
        <LightRow $gap={8}>
          <Light $c="orange" $s={14} /><Light $c="green" $s={14} /><Light $c="red" $s={14} />
        </LightRow>
      </AppTitle>

      <MenuBar>
        <MenuItem $w={28}><u>F</u>ile</MenuItem>
        <MenuItem $w={30}><u>E</u>dit</MenuItem>
        <MenuItem $w={45}><u>L</u>ayout</MenuItem>
        <MenuItem $w={36}><u>T</u>ype</MenuItem>
        <MenuItem $w={44}><u>O</u>bject</MenuItem>
        <MenuItem $w={38}>T<u>a</u>ble</MenuItem>
        <MenuItem $w={35}><u>V</u>iew</MenuItem>
        <MenuItem $w={49}><u>W</u>indow</MenuItem>
        <MenuItem $w={30}><u>H</u>elp</MenuItem>
      </MenuBar>

      <ControlBar>
        <Grip />
        <Cell $w={20} $pt={11}><IconRefPoint /></Cell>
        <Cell $w={90} $ml={11}>
          <CellRow><CtrlLabel>X:</CtrlLabel><Field w={79} text="106 mm" /></CellRow>
          <CellRow><CtrlLabel>Y:</CtrlLabel><Field w={79} text="2 mm" /></CellRow>
        </Cell>
        <Cell $w={92} $ml={7}>
          <CellRow><CtrlLabel>W:</CtrlLabel><Field w={79} /></CellRow>
          <CellRow><CtrlLabel>H:</CtrlLabel><Field w={79} /></CellRow>
        </Cell>
        <Cell $w={14} $ml={5} $pt={15}><IconBug /></Cell>
        <Sep $ml={4} />
        <Cell $w={97} $ml={5}>
          <CellRow><IconWrapA /><Field w={78} arrows /></CellRow>
          <CellRow><IconWrapB /><Field w={78} arrows /></CellRow>
        </Cell>
        <Chain><IconLink /></Chain>
        <Cell $w={96} $ml={5}>
          <CellRow><IconAngle /><Field w={79} arrows /></CellRow>
          <CellRow><IconSkew /><Field w={79} arrows /></CellRow>
        </Cell>
        <Sep $ml={7} />
        <Cell $w={80} $ml={5}>
          <Select $w={80}><Knob /><BlueSpin><SpinArrows /></BlueSpin></Select>
          <Select $w={80}><StrokeSwatch /><BlueSpin><SpinArrows /></BlueSpin></Select>
        </Cell>
        <Cell $w={16} $ml={10}><IconFrameSel /></Cell>
        <Cell $w={160} $ml={3}>
          <CellRow>
            <Select $w={138}><SelectText>[Basic Text Frame]</SelectText><BlueSpin><SpinArrows /></BlueSpin></Select>
            <IconStylePick />
          </CellRow>
          <MiniRow><IconMini /><IconMini star /></MiniRow>
        </Cell>
        <Sep $ml={5} />
        <Cell $w={16} $ml={5}><IconList /><IconList /></Cell>
        <Sep $ml={7} />
        <Cell $w={22} $ml={7} $pt={12}><IconFolio /></Cell>
        <Sep $ml={6} />
        <Cell $w={18} $ml={3} $pt={7}><Circle /><CellSpacer /><IconDoc /></Cell>
        <RightFill />
      </ControlBar>

      <Workspace>
        <BackWindow>
          <BackTitle>ed-5-1:2 @ 130%</BackTitle>
          <BackCorner />
          <BackHRuler>
            <HRuler
              w={1151}
              h={15}
              runs={[
                { x0: 27, unit: 3.7, values: [0], step: 10 },
                { x0: 27, unit: 3.707, values: [130, 140], step: 10 },
                { x0: 575, unit: 3.7, values: [0, 10, 20, 30, 40], step: 10 },
              ]}
            />
          </BackHRuler>
          <BackVRuler><VRuler w={17} h={802} y0={20} unit={3.7} step={10} from={70} to={210} /></BackVRuler>
          <Pasteboard>
            <Spread>
              <PageCol $pt={501}>
                <EntryList>{entriesLeft.map((n) => <EntryBlock key={n} n={n} />)}</EntryList>
                <PageNum>2</PageNum>
              </PageCol>
              <PageCol $pt={34}>
                <EntryList>{entriesRight.map((n) => <EntryBlock key={n} n={n} />)}</EntryList>
                <PageNum $end>3</PageNum>
              </PageCol>
            </Spread>
          </Pasteboard>
          <BackScroll>
            <ScrollThumb $mt={79} $h={436} />
          </BackScroll>
        </BackWindow>

        {/* left document */}
        <DocWindow $x={82} $y={15} $w={479} $h={609} $tb={21} $z={2}>
          <WinTitle>
            <WinIcon><Butterfly /></WinIcon>
            <WinName>Untitled-5 @ 88%</WinName>
            <LightRow $gap={7}><Light $c="off" $s={14} /><Light $c="off" $s={14} /><Light $c="off" $s={14} /></LightRow>
          </WinTitle>
          <WinBody $rw={16} $rh={16} $pl={8}>
            <RulerCorner><Crosshair /></RulerCorner>
            <HRuler
              w={436}
              h={16}
              runs={[
                { x0: 33, unit: 2.507, values: range(0, 140, 20), step: 20 },
                { x0: 403, unit: 2.507, values: [0], step: 20 },
              ]}
            />
            <VRuler w={16} h={553} y0={13} unit={2.5} step={20} from={0} to={200} />
            <Canvas>
              <Guide $x={13} />
              <Guide $x={423} />
              <Bleed $x={25} $y={7} $w={385} $h={539} />
              <SheetPage $x={33} $y={13} $w={370} $h={526}>
                <MarginBox $x={24} $y={24} $w={320} $h={451}>
                  <ProductFrame $w={108} $h={15} />
                  <TinyTag $y={0}>&lt;&lt;Product&gt;&gt;</TinyTag>
                  <FrameLine $y={26} />
                  <TinyTag $y={27}>&lt;&lt;Description&gt;&gt;</TinyTag>
                  <FrameLine $y={78} />
                </MarginBox>
              </SheetPage>
            </Canvas>
            <Track mt={56} h={430} />
          </WinBody>
          <Status pl={9} zoom="88,03%" zw={78} mid={1} />
        </DocWindow>

        {/* right document */}
        <DocWindow $x={778} $y={17} $w={473} $h={592} $tb={20} $z={3}>
          <WinTitle $active>
            <WinIcon><Butterfly /></WinIcon>
            <WinName>Untitled-5-1:1 @ 85%</WinName>
            <LightRow $gap={7}><Light $c="orange" $s={14} /><Light $c="green" $s={14} /><Light $c="red" $s={14} /></LightRow>
          </WinTitle>
          <WinBody $rw={15} $rh={16} $pl={8}>
            <RulerCorner><Crosshair /></RulerCorner>
            <HRuler
              w={431}
              h={16}
              runs={[
                { x0: 38, unit: 2.41, values: range(0, 140, 20), step: 20 },
                { x0: 395, unit: 2.41, values: [0], step: 20 },
              ]}
            />
            <VRuler w={15} h={537} y0={15} unit={2.41} step={20} from={0} to={200} />
            <Canvas>
              <Guide $x={17} />
              <Guide $x={415} />
              <Bleed $x={30} $y={8} $w={373} $h={523} />
              <SheetPage $x={37} $y={15} $w={358} $h={507}>
                <MarginBox $x={23} $y={23} $w={310} $h={437}>
                  <ProductFrame $w={104} $h={14} />
                  <PlaceholderBar $y={0} $w={32} $c="#e848d0" />
                  <FrameLine $y={25} />
                  <PlaceholderBar $y={25} $w={42} $c="#b8c020" />
                  <FrameLine $y={75} />
                </MarginBox>
                <FooterFrame $x={23} $y={466} $w={310} $h={11}><OverflowDot /></FooterFrame>
              </SheetPage>
            </Canvas>
            <Track mt={55} h={416} />
          </WinBody>
          <Status pl={9} zoom="85,25%" zw={76} mid={3} />
        </DocWindow>

        {/* toolbox */}
        <Toolbox>
          <ToolTitle />
          <Banner><BannerArt /></Banner>
          <ToolSection>
            <ToolRow><Tool $on><IconSel /></Tool><Tool $more><IconSel white /></Tool></ToolRow>
          </ToolSection>
          <ToolSection>
            <ToolRow><Tool $more><IconPen /></Tool><Tool $more><ToolLetter $s={21}>T</ToolLetter></Tool></ToolRow>
            <ToolRow><Tool $more><IconPencil /></Tool><Tool><IconLine /></Tool></ToolRow>
            <ToolRow><Tool $more><IconFrame /></Tool><Tool $more><IconRect /></Tool></ToolRow>
          </ToolSection>
          <ToolSection>
            <ToolRow><Tool><IconRotate /></Tool><Tool><IconScale /></Tool></ToolRow>
            <ToolRow><Tool><IconShear /></Tool><Tool><IconFree /></Tool></ToolRow>
          </ToolSection>
          <ToolSection>
            <ToolRow><Tool $more><IconDrop /></Tool><Tool><IconGrad /></Tool></ToolRow>
            <ToolRow><Tool><IconButton /></Tool><Tool><IconScissors /></Tool></ToolRow>
          </ToolSection>
          <ToolSection>
            <ToolRow><Tool><IconHand /></Tool><Tool><IconZoom /></Tool></ToolRow>
          </ToolSection>
          <ColorWell>
            <Swatch $x={9} $y={9} $w={28} />
            <Swatch $x={22} $y={20} $w={28}><InnerHole /></Swatch>
            <SwapSlot><IconSwap /></SwapSlot>
            <DefaultSlot><IconDefault /></DefaultSlot>
          </ColorWell>
          <SmallRow $h={20} $pl={8}>
            <SmallTool $w={24}><Tool $on $small><IconFormatBox /></Tool></SmallTool>
            <SmallTool $w={12}><ToolLetter $s={13}>T</ToolLetter></SmallTool>
          </SmallRow>
          <SmallRow $h={24} $pl={4}>
            <SmallTool $w={18}><SmallBtn $bg="#000" /></SmallTool>
            <SmallTool $w={14}><SmallBtn $bg="linear-gradient(90deg,#fff,#111)" /></SmallTool>
            <SmallTool $w={18}>
              <SmallBtn $on $bg="linear-gradient(to bottom right,#fff 42%,#d4122e 42% 58%,#fff 58%)" />
            </SmallTool>
          </SmallRow>
          <ToolSection $last>
            <ToolRow><Tool $on><IconNormal /></Tool><Tool $more><IconRect /></Tool></ToolRow>
          </ToolSection>
        </Toolbox>

        {/* data merge */}
        <MergePanel>
          <MergeTitle>
            <LightRow $gap={4}><Light $c="orange" $s={12} /><Light $c="red" $s={12} /></LightRow>
          </MergeTitle>
          <MergeTabs>
            <MergeTab>Data Merge</MergeTab>
            <Circle />
          </MergeTabs>
          <FileLine>Product test.csv</FileLine>
          <MergeMid>
            <MergeList>
              <MergeRow><MergeT>T</MergeT>Product<MergeA>A</MergeA></MergeRow>
              <MergeRow $last><MergeT>T</MergeT>Description<MergeA>A</MergeA></MergeRow>
            </MergeList>
            <MergeScroll><Tri d="u" c="#999" /><Tri d="d" c="#777" /></MergeScroll>
          </MergeMid>
          <MergeFoot>
            <Check />Preview
            <Nav $ml={26}><NavArrow d="l" bar /></Nav>
            <Nav $ml={8}><NavArrow d="l" /></Nav>
            <PageBox>1</PageBox>
            <Nav $ml={8}><NavArrow d="r" /></Nav>
            <Nav $ml={7}><NavArrow d="r" bar /></Nav>
            <Nav $ml={2}><IconPlace /></Nav>
            <Nav $ml={4}><ResizeMark /></Nav>
          </MergeFoot>
        </MergePanel>

        {/* right side dock */}
        <SideStrip>
          <Dock $h={330} $mt={3}>
            <DockArrowSlot><Circle /></DockArrowSlot>
            <DockTab $h={32}><DockLabel>Info</DockLabel></DockTab>
            <DockTab $h={41} $on><DockLabel>Pages</DockLabel></DockTab>
            <DockTab $h={40}><DockLabel>Layers</DockLabel></DockTab>
          </Dock>
          <Dock $h={218} $mt={5}>
            <DockTab $h={64} $pt={14}><DockLabel>racter Styles</DockLabel></DockTab>
            <DockTab $h={86} $on><DockLabel>Paragraph Styles</DockLabel></DockTab>
            <DockTab $h={60}><DockLabel>Object Styles</DockLabel></DockTab>
            <span style={{ height: 5 }} />
          </Dock>
          <Dock $h={303} $mt={11}>
            <DockArrowSlot><Circle /></DockArrowSlot>
            <DockTab $h={45} $on><DockLabel>Color</DockLabel></DockTab>
            <DockTab $h={53}><DockLabel>Swatches</DockLabel></DockTab>
            <DockTab $h={70}><DockLabel>Transparency</DockLabel></DockTab>
            <DockTab $h={40}><DockLabel>Stroke</DockLabel></DockTab>
            <span style={{ height: 1 }} />
          </Dock>
        </SideStrip>
      </Workspace>
    </Screen>
  );
}
